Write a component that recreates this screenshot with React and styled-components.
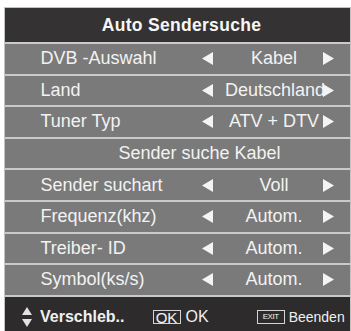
import styled, { createGlobalStyle } from 'styled-components';

const GlobalStyle = createGlobalStyle`
  html, body {
    margin: 0;
    padding: 0;
    background: #ffffff;
  }
  body {
    font-family: "Liberation Sans", Arial, sans-serif;
  }
`;

const Panel = styled.div`
  margin: 7px 0 0 4px;
  width: 345px;
  height: 330px;
  overflow: hidden;
  border: 1px solid #c2c2c2;
  border-bottom: none;
  background: #cacaca;
  display: flex;
  flex-direction: column;
`;

const Header = styled.div`
  height: 34px;
  flex: none;
  background: #343232;
  color: #f6f6f6;
  font-size: 17.5px;
  font-weight: 700;
  letter-spacing: 0.3px;
  display: flex;
  align-items: center;
  justify-content: center;
  padding-left: 8px;
`;

const Rows = styled.div`
  display: flex;
  flex-direction: column;
  gap: 2px;
  padding: 2px 0;
`;

const Row = styled.div`
  height: 29.6px;
  background: #7a7a7a;
  color: #f2f2f2;
  font-size: 18px;
  display: grid;
  grid-template-columns: 161.5px 11px 110px 11px;
  align-items: center;
  padding-left: 35.5px;
  white-space: nowrap;
`;

const CenterRow = styled(Row)`
  display: flex;
  justify-content: center;
  padding-left: 44px;
`;

const Label = styled.span``;

const Value = styled.span`
  padding-left: 12px;
  text-align: center;
  white-space: nowrap;
`;

const Arrow = styled.svg`
  display: block;
  width: 11px;
  height: 13px;
`;

const Footer = styled.div`
  flex: 1;
  background: #2d2b2b;
  color: #f0f0f0;
  display: flex;
  align-items: center;
  padding: 0 0 0 17px;
  height: 35px;
`;

const Hint = styled.div`
  display: flex;
  align-items: center;
  gap: ${(p) => p.$gap || 4}px;
  margin-right: ${(p) => p.$after || 0}px;
  font-size: ${(p) => p.$size || 15}px;
  font-weight: ${(p) => (p.$bold ? 700 : 400)};
`;

const Key = styled.span`
  display: inline-flex;
  align-items: center;
  justify-content: center;
  box-sizing: border-box;
  width: 28px;
  height: 14px;
  border: 1.5px solid #d4d4d4;
  color: #f4f4f4;
  font-size: ${(p) => p.$size || 14}px;
  letter-spacing: ${(p) => (p.$narrow ? '-0.5px' : '0')};
  line-height: 1;
`;

function LeftArrow() {
  return (
    <Arrow viewBox="0 0 11 13">
      <polygon points="11,0 11,13 0,6.5" fill="#f4f4f4" />
    </Arrow>
  );
}

function RightArrow() {
  return (
    <Arrow viewBox="0 0 11 13">
      <polygon points="0,0 0,13 11,6.5" fill="#f4f4f4" />
    </Arrow>
  );
}

function UpDown() {
  return (
    <svg width="10" height="20" viewBox="0 0 10 20">
      <polygon points="5,0 10,8 0,8" fill="#e2e2e2" />
      <polygon points="0,12 10,12 5,20" fill="#e2e2e2" />
    </svg>
  );
}

const settings = [
  { label: 'DVB -Auswahl', value: 'Kabel' },
  { label: 'Land', value: 'Deutschland' },
  { label: 'Tuner Typ', value: 'ATV + DTV' },
  { title: 'Sender suche Kabel' },
  { label: 'Sender suchart', value: 'Voll' },
  { label: 'Frequenz(khz)', value: 'Autom.' },
  { label: 'Treiber- ID', value: 'Autom.' },
  { label: 'Symbol(ks/s)', value: 'Autom.' },
];

export default function App() {
  return (
    <>
      <GlobalStyle />
      <Panel>
        <Header>Auto Sendersuche</Header>
        <Rows>
          {settings.map((s) =>
            s.title ? (
              <CenterRow key={s.title}>{s.title}</CenterRow>
            ) : (
              <Row key={s.label}>
                <Label>{s.label}</Label>
                <LeftArrow />
                <Value>{s.value}</Value>
                <RightArrow />
              </Row>
            )
          )}
        </Rows>
        <Footer>
          <Hint $bold $size={16} $gap={8} $after={28}>
            <UpDown />
            Verschleb..
          </Hint>
          <Hint $size={16} $gap={5} $after={48}>
            <Key $size={15}>OK</Key>
            OK
          </Hint>
          <Hint $size={14} $gap={4}>
            <Key $size={8} $narrow>EXIT</Key>
            Beenden
          </Hint>
        </Footer>
      </Panel>
    </>
  );
}
